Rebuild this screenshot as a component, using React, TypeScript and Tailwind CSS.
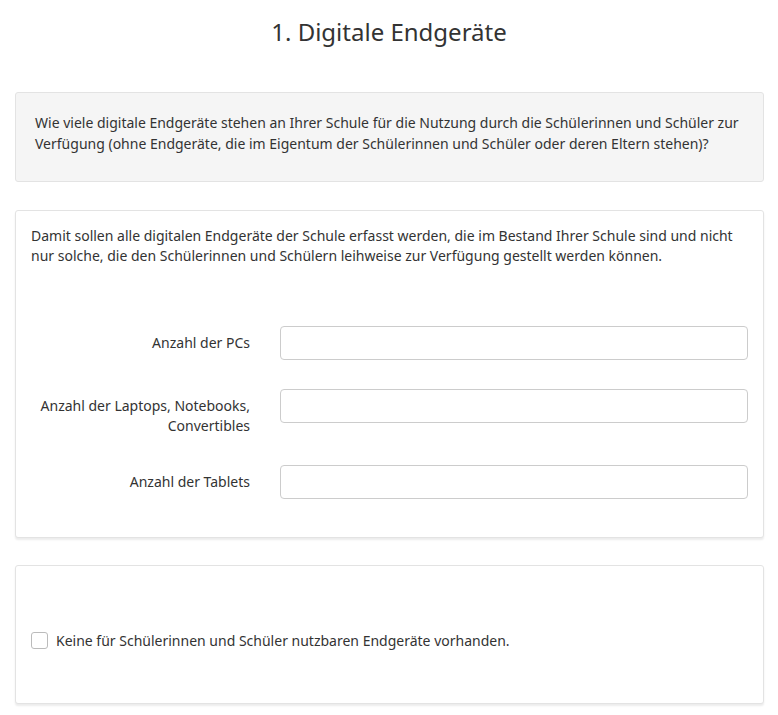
const FONT = "font-['Noto_Sans','Open_Sans',sans-serif]"

const CARD_CLASSNAME =
  'ml-[15px] mr-[14px] rounded-[3px] border border-[#e3e3e3] bg-white shadow-[0_2px_2px_rgba(0,0,0,0.08)]'

const INPUT_CLASSNAME =
  'h-[34px] w-full rounded-[4px] border border-[#cccccc] bg-white px-3 text-[14px] outline-none'

const FIELDS = [
  { id: 'pcs', label: ['Anzahl der PCs'] },
  { id: 'laptops', label: ['Anzahl der Laptops, Notebooks,', 'Convertibles'] },
  { id: 'tablets', label: ['Anzahl der Tablets'] },
]

function FieldRow(props: { id: string; label: string[] }) {
  const multiline = props.label.length > 1
  return (
    <div className={`flex ${multiline ? 'items-start' : 'items-center'}`}>
      <label
        htmlFor={props.id}
        className={`w-[219px] shrink-0 text-right text-[14px] leading-[20px] text-[#333] ${multiline ? 'pt-[7px]' : ''}`}
      >
        {props.label.map((l) => (
          <div key={l}>{l}</div>
        ))}
      </label>
      <div className="ml-[30px] flex-1">
        <input id={props.id} type="text" className={INPUT_CLASSNAME} />
      </div>
    </div>
  )
}

export default function App() {
  return (
    <div className={`${FONT} min-h-[715px] w-[778px] bg-white pb-3 text-[#333]`}>
      <h1 className="pt-[16px] text-center text-[24px] leading-[32px] text-[#333]">
        1. Digitale Endgeräte
      </h1>

      <div className="ml-[15px] mr-[14px] mt-[44px] rounded-[3px] border border-[#e3e3e3] bg-[#f5f5f5] px-[19px] pb-[27px] pt-[19px]">
        <p className="text-[14px] leading-[21px]">
          Wie viele digitale Endgeräte stehen an Ihrer Schule für die Nutzung durch die Schülerinnen und
          Schüler zur Verfügung (ohne Endgeräte, die im Eigentum der Schülerinnen und Schüler oder deren
          Eltern stehen)?
        </p>
      </div>

      <section className={`${CARD_CLASSNAME} mt-[28px] px-[15px] pb-[38px] pt-[15px]`}>
        <p className="text-[14px] leading-[20px]">
          Damit sollen alle digitalen Endgeräte der Schule erfasst werden, die im Bestand Ihrer Schule sind
          und nicht nur solche, die den Schülerinnen und Schülern leihweise zur Verfügung gestellt werden
          können.
        </p>
        <div className="mt-[60px] grid gap-[29px]">
          {FIELDS.map((f) => (
            <FieldRow key={f.id} id={f.id} label={f.label} />
          ))}
        </div>
      </section>

      <section className={`${CARD_CLASSNAME} mt-[27px] flex h-[139px] items-center px-[15px] pt-[12px]`}>
        <label className="flex items-center gap-[8px] text-[14px] leading-[20px]">
          <span className="inline-block h-[17px] w-[17px] rounded-[3px] border border-[#bbb] bg-white" />
          Keine für Schülerinnen und Schüler nutzbaren Endgeräte vorhanden.
        </label>
      </section>
    </div>
  )
}
